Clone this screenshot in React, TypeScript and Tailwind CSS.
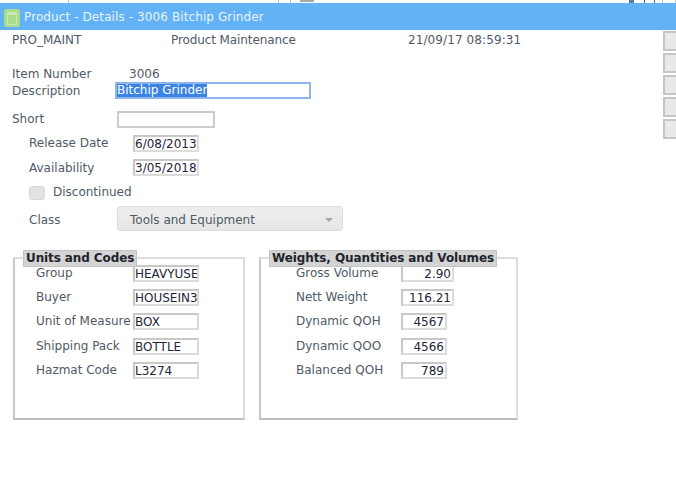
const font = "font-['DejaVu_Sans',sans-serif]";

function Row({ label, value, w, right, mt, lw = "w-[97px]", lp = "pt-[1px]" }: { label: string; value: string; w: string; right?: boolean; mt: string; lw?: string; lp?: string }) {
  return (
    <div className={`flex items-start ${mt}`}>
      <span className={`${lw} ${lp} text-[12px] leading-[14px] text-[#505a66] whitespace-nowrap`}>{label}</span>
      <span className={`${w} h-[17px] border-2 border-[#dcdcdc] border-t-[#c8c8c8] border-l-[#c8c8c8] bg-white text-[12px] leading-[14px] text-[#25253a] whitespace-nowrap overflow-hidden ${right ? "text-right pr-[1px]" : ""}`}>
        {value}
      </span>
    </div>
  );
}

function Group({ title, w, children }: { title: string; w: string; children: React.ReactNode }) {
  return (
    <div className={`${w} h-[163px] border-2 border-[#dddddd] border-b-[#bdbdbd] border-l-[#c8c8c8] relative`}>
      <span className="absolute top-[-9px] left-[8px] h-[17px] px-[2px] bg-[#d4d4d4] border border-[#c4c4c4] text-[12px] leading-[15px] tracking-[-0.1px] font-bold text-[#20242c] whitespace-nowrap">
        {title}
      </span>
      {children}
    </div>
  );
}

export default function App() {
  return (
    <div className={`w-[676px] h-[479px] bg-white overflow-hidden relative ${font}`}>
      <div className="h-[3px] overflow-hidden flex items-start relative">
        <span className="ml-[6px] mt-[-11px] text-[12px] leading-[14px] text-[#222222] w-[62px]">5 Name</span>
        <span className="w-px h-[3px] bg-[#c4c4c4]" />
        <span className="ml-[209px] w-px h-[3px] bg-[#c4c4c4]" />
        <span className="ml-[11px] w-px h-[3px] bg-[#c4c4c4]" />
        <span className="ml-[9px] w-[14px] h-[2px] bg-[#a8a8a8]" />
        <span className="ml-[10px] mt-[-11px] text-[12px] leading-[14px] text-[#222222] w-[305px]">Details</span>
        <span className="w-[5px] h-[3px] bg-[#5f7fa0]" />
        <span className="ml-[10px] w-[11px] h-[3px] border-x border-[#4a6f94]" />
        <span className="ml-[7px] w-[14px] h-[3px] border-x border-[#c4c4c4]" />
      </div>
      <div className="h-[27px] bg-[#63b2f6] flex items-center pl-[4px]">
        <span className="w-[16px] h-[18px] mt-[3px] rounded-[2px] bg-[#a9dc8f] flex items-center justify-center">
          <span className="w-[10px] h-[13px] border border-[#c6ecb4] border-t-[3px]" />
        </span>
        <span className="ml-[4px] text-[12px] tracking-[0.1px] text-[#e8f4fe]">Product - Details - 3006 Bitchip Grinder</span>
      </div>

      <div className="absolute right-0 top-[31px] flex flex-col gap-[2px]">
        {[0, 1, 2, 3, 4].map((i) => (
          <span key={i} className="block w-[13px] h-[20px] bg-[#e9e9e9] border-2 border-r-0 border-[#c6c6c6]" />
        ))}
      </div>

      <div className="flex text-[12px] leading-[14px] text-[#505a66] mt-[3px] pl-[12px]">
        <span className="w-[159px]">PRO_MAINT</span>
        <span className="w-[237px] tracking-[-0.1px]">Product Maintenance</span>
        <span className="tracking-[0.1px]">21/09/17 08:59:31</span>
      </div>

      <div className="pl-[12px] mt-[20px] flex text-[12px] leading-[14px] text-[#505a66]">
        <span className="w-[117px]">Item Number</span>
        <span>3006</span>
      </div>
      <div className="pl-[12px] mt-[1px] flex items-start">
        <span className="w-[103px] text-[12px] leading-[18px] text-[#505a66]">Description</span>
        <span className="w-[196px] h-[17px] border-2 border-[#8fb4ec] bg-white text-[12px] leading-[13px] text-white">
          <span className="bg-[#3b83e4] inline-block h-[13px] leading-[13px]">Bitchip Grinder</span>
        </span>
      </div>
      <div className="pl-[12px] mt-[11px] flex items-start">
        <span className="w-[105px] text-[12px] leading-[16px] text-[#505a66]">Short</span>
        <span className="w-[98px] h-[17px] border-2 border-[#cccccc] bg-white" />
      </div>

      <div className="pl-[29px]">
        <Row label="Release Date" value="6/08/2013" w="w-[66px]" mt="mt-[7px]" lw="w-[104px]" />
        <Row label="Availability" value="3/05/2018" w="w-[66px]" mt="mt-[7px]" lw="w-[104px]" lp="pt-[2px]" />
        <div className="flex items-center mt-[10px]">
          <span className="w-[16px] h-[14px] rounded-[3px] bg-[#e3e3e3] border border-[#dadada]" />
          <span className="ml-[8px] self-start text-[12px] leading-[12px] text-[#505a66]">Discontinued</span>
        </div>
        <div className="flex items-center mt-[6px]">
          <span className="w-[88px] pt-[2px] text-[12px] text-[#505a66]">Class</span>
          <span className="w-[226px] h-[25px] pt-[2px] rounded-[3px] bg-gradient-to-b from-[#eeeeee] to-[#e6e6e6] border border-[#dcdcdc] pl-[12px] pr-[9px] flex items-center justify-between text-[12px] text-[#505a66]">
            Tools and Equipment
            <span className="w-0 h-0 border-x-[4px] border-x-transparent border-t-[4px] border-t-[#a8a8a8]" />
          </span>
        </div>
      </div>

      <div className="flex gap-[14px] pl-[13px] mt-[26px]">
        <Group title="Units and Codes" w="w-[232px]">
          <div className="pl-[21px] pt-[6px]">
            <Row label="Group" value="HEAVYUSE" w="w-[66px]" mt="mt-0" />
            <Row label="Buyer" value="HOUSEIN3" w="w-[66px]" mt="mt-[7px]" />
            <Row label="Unit of Measure" value="BOX" w="w-[66px]" mt="mt-[7px]" />
            <Row label="Shipping Pack" value="BOTTLE" w="w-[66px]" mt="mt-[8px]" />
            <Row label="Hazmat Code" value="L3274" w="w-[66px]" mt="mt-[7px]" />
          </div>
        </Group>
        <Group title="Weights, Quantities and Volumes" w="w-[259px]">
          <div className="pl-[35px] pt-[6px]">
            <Row label="Gross Volume" value="2.90" w="w-[53px]" right mt="mt-0" lw="w-[105px]" />
            <Row label="Nett Weight" value="116.21" w="w-[53px]" right mt="mt-[7px]" lw="w-[105px]" />
            <Row label="Dynamic QOH" value="4567" w="w-[46px]" right mt="mt-[7px]" lw="w-[105px]" />
            <Row label="Dynamic QOO" value="4566" w="w-[46px]" right mt="mt-[8px]" lw="w-[105px]" />
            <Row label="Balanced QOH" value="789" w="w-[46px]" right mt="mt-[7px]" lw="w-[105px]" />
          </div>
        </Group>
      </div>
    </div>
  );
}
